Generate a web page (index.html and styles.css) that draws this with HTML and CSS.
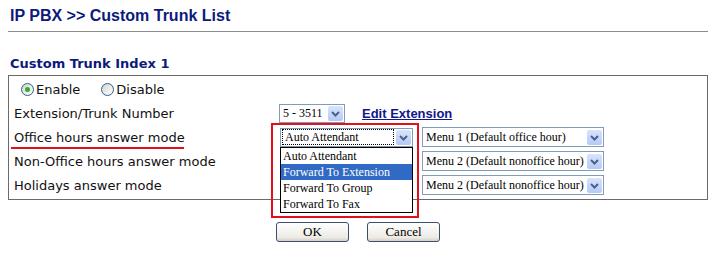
FILE: index.html
```html
<html>
  <head>
    <meta charset="utf-8">
    <title>Custom Trunk List</title>
    <link rel="stylesheet" href="styles.css">
  </head>
  <body>
    <div class="page">
      <h1 class="title">IP PBX &gt;&gt; Custom Trunk List</h1>
      <h2 class="section">Custom Trunk Index 1</h2>

      <div class="box">
        <div class="row">
          <label class="opt"><span class="radio on"></span>Enable</label>
          <label class="opt"><span class="radio"></span>Disable</label>
        </div>

        <div class="row">
          <div class="label">Extension/Trunk Number</div>
          <div class="ctrl">
            <div class="sel sel-ext"><span class="val">5 - 3511</span><span class="btn"><svg width="15" height="15" viewBox="0 0 15 15"><path d="M4 6 L7.5 9.5 L11 6" fill="none" stroke="#4d6185" stroke-width="2"/></svg></span></div>
            <a class="link" href="#">Edit Extension</a>
          </div>
        </div>

        <div class="row">
          <div class="label marked">Office hours answer mode</div>
          <div class="ctrl">
            <div class="pick">
              <div class="sel sel-mode"><span class="val focus">Auto Attendant</span><span class="btn"><svg width="15" height="15" viewBox="0 0 15 15"><path d="M4 6 L7.5 9.5 L11 6" fill="none" stroke="#4d6185" stroke-width="2"/></svg></span></div>
              <ul class="list">
                <li>Auto Attendant</li>
                <li class="hi">Forward To Extension</li>
                <li>Forward To Group</li>
                <li>Forward To Fax</li>
              </ul>
              <div class="note"></div>
            </div>
            <div class="sel sel-menu"><span class="val">Menu 1 (Default office hour)</span><span class="btn"><svg width="15" height="15" viewBox="0 0 15 15"><path d="M4 6 L7.5 9.5 L11 6" fill="none" stroke="#4d6185" stroke-width="2"/></svg></span></div>
          </div>
        </div>

        <div class="row">
          <div class="label">Non-Office hours answer mode</div>
          <div class="ctrl">
            <!-- covered by the open list above -->
            <div class="sel sel-mode"></div>
            <div class="sel sel-menu"><span class="val">Menu 2 (Default nonoffice hour)</span><span class="btn"><svg width="15" height="15" viewBox="0 0 15 15"><path d="M4 6 L7.5 9.5 L11 6" fill="none" stroke="#4d6185" stroke-width="2"/></svg></span></div>
          </div>
        </div>

        <div class="row">
          <div class="label">Holidays answer mode</div>
          <div class="ctrl">
            <div class="sel sel-mode"></div>
            <div class="sel sel-menu"><span class="val">Menu 2 (Default nonoffice hour)</span><span class="btn"><svg width="15" height="15" viewBox="0 0 15 15"><path d="M4 6 L7.5 9.5 L11 6" fill="none" stroke="#4d6185" stroke-width="2"/></svg></span></div>
          </div>
        </div>
      </div>

      <div class="actions">
        <button class="push">OK</button>
        <button class="push">Cancel</button>
      </div>
    </div>
  </body>
</html>
```

FILE: styles.css
```css
body {
  margin: 0;
  background: #fff;
}

.page {
  width: 700px;
  margin-left: 8px;
}

.title {
  margin: 0;
  padding: 6px 0 5px 2px;
  font: bold 16px/20px "Liberation Sans", Arial, sans-serif;
  color: #0c1a7c;
  border-bottom: 1px solid #8c8c8c;
}

.section {
  margin: 24px 0 3px 2px;
  font: bold 13px/16px "DejaVu Sans", Verdana, sans-serif;
  color: #0c1a7c;
}

.box {
  border: 1px solid #6a6a6a;
  padding: 1px 0 2px 5px;
  font: 13px "DejaVu Sans", Verdana, sans-serif;
  color: #111;
}

.row {
  display: flex;
  align-items: center;
  height: 24px;
}

.opt {
  display: flex;
  align-items: center;
  gap: 2px;
  margin-left: 7px;
  margin-right: 14px;
}

.radio {
  width: 11px;
  height: 11px;
  border: 1px solid #2c5f8c;
  border-radius: 50%;
  background: linear-gradient(135deg, #d4d4ce, #fff);
  display: flex;
  align-items: center;
  justify-content: center;
}

.radio.on::after {
  content: "";
  width: 5px;
  height: 5px;
  border-radius: 50%;
  background: #2bb02b;
}

.label {
  width: 265px;
  flex: none;
}

.marked {
  position: relative;
}

.marked::after {
  content: "";
  position: absolute;
  left: -3px;
  top: 17px;
  width: 173px;
  height: 2px;
  background: #e0101c;
}

.ctrl {
  display: flex;
  align-items: center;
}

.sel {
  display: flex;
  align-items: center;
  justify-content: space-between;
  box-sizing: border-box;
  border: 1px solid #7f9db9;
  background: #fff;
  font: 12px "Liberation Serif", "Times New Roman", serif;
  color: #000;
  padding: 1px;
}

.val {
  padding: 0 2px;
  line-height: 14px;
  white-space: nowrap;
}

.focus {
  flex: 1;
  border: 1px dotted #000;
  margin-right: 2px;
}

.btn {
  width: 15px;
  height: 15px;
  flex: none;
  background: linear-gradient(#d9e4fd, #b4c9f6);
  border-radius: 2px;
  display: flex;
}

.sel-ext {
  width: 66px;
  height: 19px;
}

.sel-mode {
  width: 133px;
  height: 19px;
  margin-left: 1px;
}

.sel-menu {
  width: 182px;
  height: 20px;
  margin-left: 9px;
}

.link {
  margin-left: 17px;
  font: bold 13px "Liberation Sans", Arial, sans-serif;
  color: #10168c;
}

.pick {
  position: relative;
}

.list {
  position: absolute;
  left: 1px;
  top: 19px;
  width: 133px;
  box-sizing: border-box;
  margin: 0;
  padding: 0;
  list-style: none;
  border: 1px solid #000;
  background: #fff;
  font: 12px/16px "Liberation Serif", "Times New Roman", serif;
  color: #000;
  z-index: 2;
}

.list li {
  padding-left: 2px;
}

.list .hi {
  background: #316ac5;
  color: #fff;
}

.note {
  position: absolute;
  left: -8px;
  top: -5px;
  width: 148px;
  height: 95px;
  box-sizing: border-box;
  border: 2px solid #e0101c;
  z-index: 3;
}

.actions {
  display: flex;
  justify-content: center;
  gap: 18px;
  margin-top: 22px;
}

.push {
  width: 73px;
  height: 20px;
  border: 1px solid #3c4f6f;
  border-radius: 3px;
  background: linear-gradient(#fff, #ecebe6 80%, #d6d0c5);
  font: 13px "Liberation Serif", "Times New Roman", serif;
  color: #000;
  padding: 0;
}
```
